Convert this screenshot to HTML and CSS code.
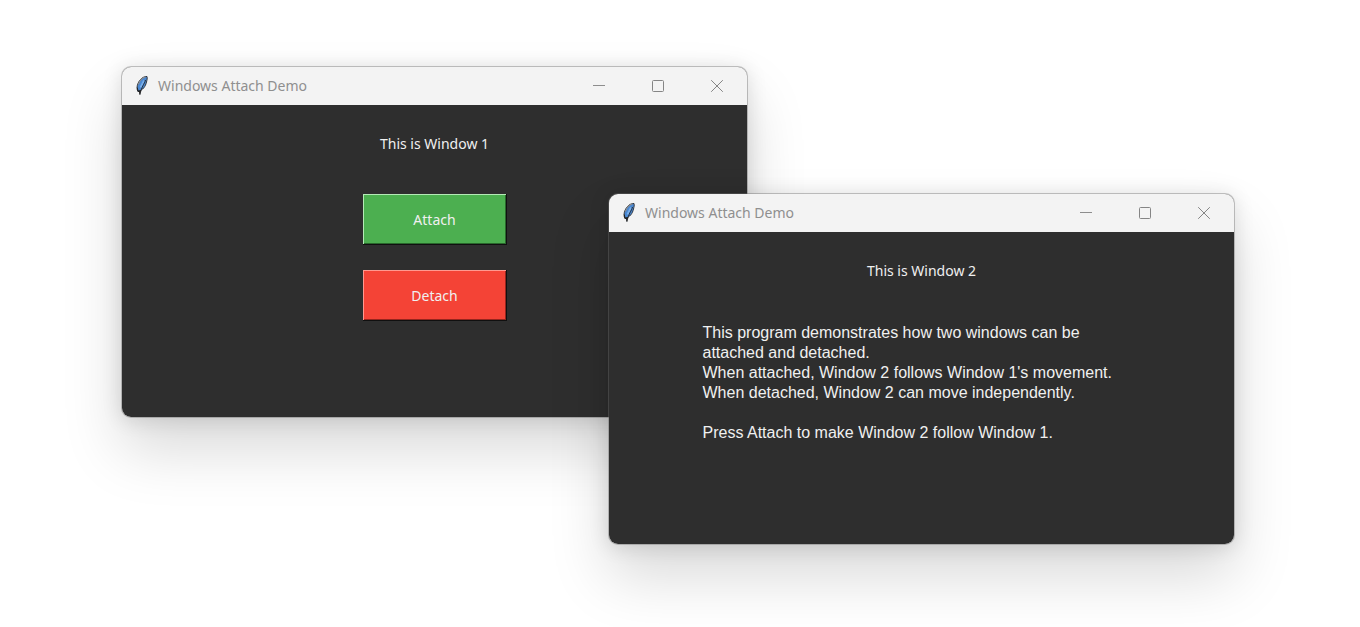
FILE: index.html
```html
<!DOCTYPE html>
<html lang="en">
<head>
<meta charset="utf-8">
<title>Windows Attach Demo</title>
<link rel="stylesheet" href="styles.css">
</head>
<body>
<svg class="defs" aria-hidden="true">
  <symbol id="feather" viewBox="0 0 14 20">
    <path d="M12 0.500C8.500 0.300 5 3 3.200 7C1.800 10 1.600 13 3 15.500C8 14 10.500 10.500 11.500 6C12 4 12.500 2 12 0.500Z" fill="#4a88d2" stroke="#33373d" stroke-width="1"/>
    <path d="M10.500 1C7.500 1.500 4.500 5 3.300 8.500" fill="none" stroke="#8c8c8c" stroke-width="1.200"/>
    <path d="M9 4.500L5.500 11.500" fill="none" stroke="#78aeea" stroke-width="1.800"/>
    <path d="M10.500 4C9.500 8 6.500 10.500 4.800 19" fill="none" stroke="#1c2026" stroke-width="0.900"/>
    <path d="M2.300 11.500L3 15.500L5.500 14.500L4.700 18" fill="#222" stroke="#222" stroke-width="1"/>
  </symbol>
  <symbol id="minimize" viewBox="0 0 14 14"><path d="M1 6.500H13" stroke="#8d8d8d" fill="none"/></symbol>
  <symbol id="maximize" viewBox="0 0 14 14"><rect x="1.500" y="1.500" width="11" height="11" rx="1" stroke="#858585" fill="none"/></symbol>
  <symbol id="close" viewBox="0 0 14 14"><path d="M1.200 1.200L12.800 12.800M12.800 1.200L1.200 12.800" stroke="#858585" fill="none"/></symbol>
</svg>
<main class="desktop">
  <section class="window window-one">
    <header class="titlebar">
      <svg class="app-icon" aria-hidden="true"><use href="#feather"/></svg>
      <h1 class="title">Windows Attach Demo</h1>
      <button class="control" aria-label="Minimize"><svg><use href="#minimize"/></svg></button>
      <button class="control" aria-label="Maximize"><svg><use href="#maximize"/></svg></button>
      <button class="control" aria-label="Close"><svg><use href="#close"/></svg></button>
    </header>
    <div class="content">
      <p class="label">This is Window 1</p>
      <div class="actions">
        <button class="action attach">Attach</button>
        <button class="action detach">Detach</button>
      </div>
    </div>
  </section>
  <section class="window window-two">
    <header class="titlebar">
      <svg class="app-icon" aria-hidden="true"><use href="#feather"/></svg>
      <h1 class="title">Windows Attach Demo</h1>
      <button class="control" aria-label="Minimize"><svg><use href="#minimize"/></svg></button>
      <button class="control" aria-label="Maximize"><svg><use href="#maximize"/></svg></button>
      <button class="control" aria-label="Close"><svg><use href="#close"/></svg></button>
    </header>
    <div class="content">
      <p class="label">This is Window 2</p>
      <div class="description">
        <p>This program demonstrates how two windows can be<br>attached and detached.<br>When attached, Window 2 follows Window 1's movement.<br>When detached, Window 2 can move independently.</p>
        <p>Press Attach to make Window 2 follow Window 1.</p>
      </div>
    </div>
  </section>
</main>
</body>
</html>
```
FILE: styles.css
```css
* { box-sizing: border-box; }
body { margin: 0; background: #fff; }
.defs { display: none; }
.desktop {
  position: relative;
  min-height: 100vh;
  overflow: hidden;
  font-family: "Noto Sans", sans-serif;
}
.window {
  position: absolute;
  display: flex;
  flex-direction: column;
  width: 46%;
  min-height: 352px;
  min-width: 627px;
  border: 1px solid rgba(110, 110, 110, 0.4);
  border-radius: 10px;
  background: #2e2e2e;
  background-clip: padding-box;
  box-shadow: 0 32px 60px rgba(0, 0, 0, 0.15), 0 2px 20px rgba(0, 0, 0, 0.12);
}
.window-one { left: 121px; top: 66px; }
.window-two { left: 608px; top: 193px; }
.titlebar {
  display: flex;
  align-items: center;
  height: 38px;
  padding: 0 1px 0 13px;
  border-radius: 9px 9px 0 0;
  background: #f3f3f3;
}
.app-icon { width: 14px; height: 20px; }
.title {
  flex: 1;
  margin: 0 0 0 9px;
  font-size: 14px;
  font-weight: 400;
  line-height: 20px;
  color: #8f8f8f;
}
.control {
  display: flex;
  align-items: center;
  justify-content: center;
  width: 59px;
  height: 38px;
  padding: 0;
  border: 0;
  background: transparent;
}
.control svg { width: 14px; height: 14px; }
.content {
  display: flex;
  flex-direction: column;
  align-items: center;
  padding-top: 29px;
  color: #f0f0f0;
}
.label {
  margin: 0;
  font-size: 14px;
  line-height: 20px;
}
.actions {
  display: flex;
  flex-direction: column;
  gap: 25px;
  margin-top: 40px;
}
.action {
  width: 144px;
  height: 51px;
  padding: 0;
  border: 0;
  font: inherit;
  font-size: 14px;
  color: #f0f0f0;
}
.attach {
  background: #4caf50;
  box-shadow: inset -1px -1px #101010, inset 1px 1px #b4eab6, inset -2px -2px #29682c;
}
.detach {
  background: #f44336;
  box-shadow: inset -1px -1px #101010, inset 1px 1px #ff9990, inset -2px -2px #97251d;
}
.description {
  width: 438px;
  margin-top: 42px;
  font-family: "Liberation Sans", Arial, sans-serif;
  font-size: 16px;
  line-height: 20px;
}
.description p { margin: 0 0 20px; }
```
